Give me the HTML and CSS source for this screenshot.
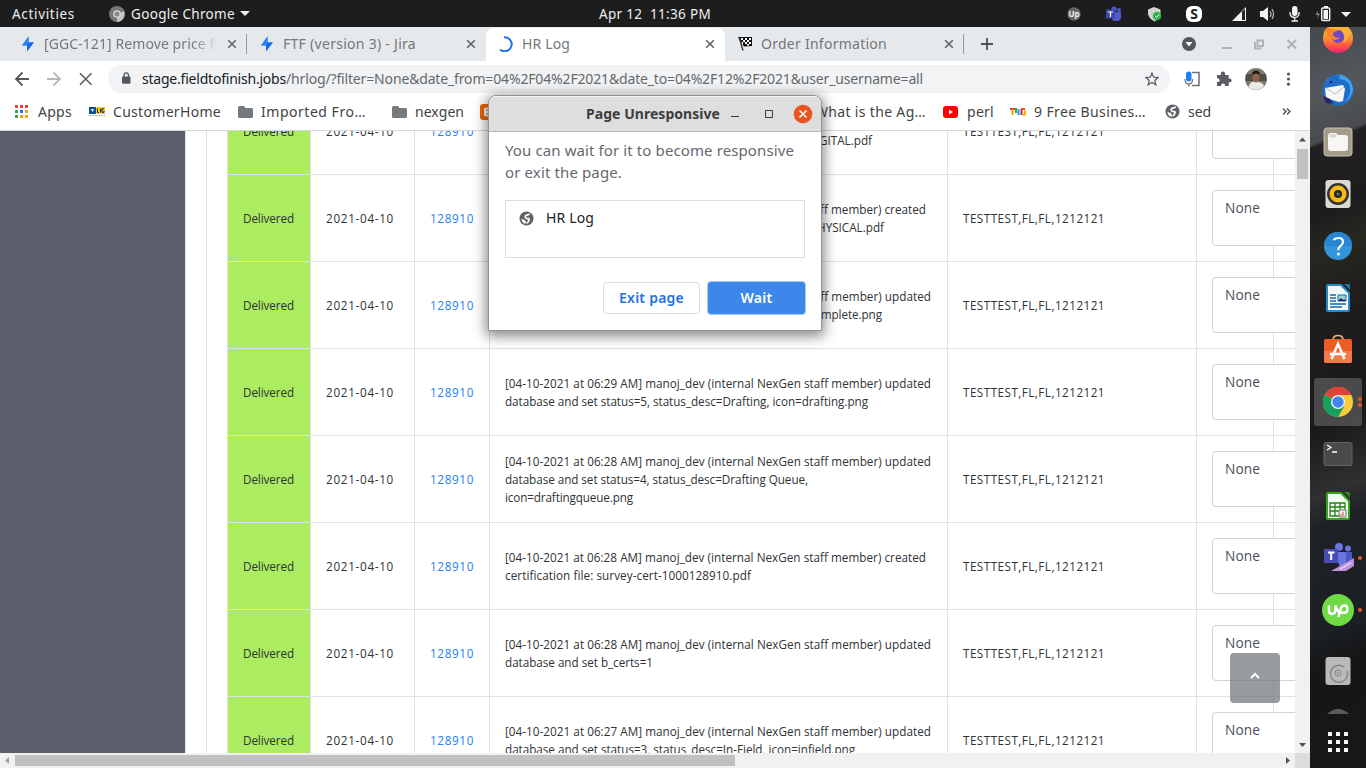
FILE: index.html
```html
<!DOCTYPE html>
<html lang="en">
<head>
<meta charset="utf-8">
<title>HR Log</title>
<link rel="stylesheet" href="styles.css">
</head>
<body>
<svg class="defs" width="0" height="0">
  <symbol id="x" viewBox="0 0 10 10"><path d="M1.200 1.200l7.600 7.600M8.800 1.200L1.200 8.800" fill="none" stroke="currentColor" stroke-width="1.600"/></symbol>
  <symbol id="jira" viewBox="0 0 16 16"><path d="M8.500.5v6H14L7 9.500H2z" fill="#2684ff"/><path d="M7 9.500L8.500 6.500H14l-7 9z" fill="#1b66e0"/><path d="M8.500.5v6L7 9.500H2z" fill="#2684ff"/></symbol>
  <symbol id="folder" viewBox="0 0 15 12"><path d="M1.500 0H6l1.500 2h6Q15 2 15 3.500v7Q15 12 13.500 12h-12Q0 12 0 10.500v-9Q0 0 1.500 0z" fill="#757a7f"/></symbol>
  <symbol id="globe" viewBox="0 0 16 16"><circle cx="8" cy="8" r="7.500" fill="#5f6368"/><path d="M11.500 3.200L9 4.200Q6 5 6.700 6.700T9.500 8.200 10.300 10.500 8 13" fill="none" stroke="#fff" stroke-width="1.800"/><path d="M2.500 8.500l3.500 1.200 1.500 2-.5 2Q3.200 12.800 2.500 8.500z" fill="#fff"/></symbol>
</svg>

<header class="topbar">
  <span class="activities" data-w="63">Activities</span>
  <svg class="app-icon" width="16" height="16" viewBox="0 0 16 16"><circle cx="8" cy="8" r="8" fill="#777"/><path d="M8 8L15 5a8 8 0 01-7 11z" fill="#c4c4c4"/><circle cx="8" cy="8" r="3.800" fill="#ddd"/><circle cx="8" cy="8" r="2.600" fill="#888"/></svg>
  <span data-w="104">Google Chrome</span>
  <svg class="caret" width="10" height="5" viewBox="0 0 10 5"><path d="M0 0h10L5 5z" fill="#eee"/></svg>
  <span class="clock" data-w="112">Apr 12&nbsp; 11:36 PM</span>
  <div class="tray">
    <svg width="300" height="26" viewBox="1066 0 300 26">
      <circle cx="1074" cy="13" r="6.700" fill="#666"/><text x="1074" y="16" class="tray-up">Up</text>
      <g fill="#5059c9"><circle cx="1114" cy="8" r="2.600"/><circle cx="1119" cy="9" r="2"/><path d="M1110 11h11v5a4 4 0 01-4 4h-4z"/><path fill="#3f48b0" d="M1106 8.500h9v9h-9z"/></g><path d="M1108 11h5M1110.500 11v5" stroke="#fff" stroke-width="1.200"/>
      <path d="M1154 6l6.500 2.500v4.500q-1 5-6 7.500-5.500-2.500-6.500-7.500V8.500z" fill="#d3d3d3"/><circle cx="1157" cy="15" r="4.300" fill="#2fb34a"/><path d="M1155 15l1.500 1.500 3-3" fill="none" stroke="#fff"/>
      <rect x="1186" y="5" width="16" height="16" rx="6" fill="#fff"/><text x="1194" y="18" class="tray-s">S</text>
      <path d="M1232 20l14-14v14z" fill="#f3f3f3"/><path d="M1242 10.500v8.500h3V8z" fill="#222"/>
      <path d="M1260 10h3l5-4v14l-5-4h-3z" fill="#f3f3f3"/><path d="M1270 10q2 3 0 6M1272 8q3 5 0 10" fill="none" stroke="#bbb" stroke-width="1.200"/>
      <rect x="1292" y="5" width="5.500" height="10" rx="2.700" fill="#f3f3f3"/><path d="M1290 11v2q1 3.500 4.700 3.500T1299 13v-2M1294.700 16.500V20M1291.500 20h6.500" fill="none" stroke="#f3f3f3" stroke-width="1.300"/>
      <path d="M1318 9l-2.500 5h2.500l-1 4 3-5.500h-2.500z" fill="#888"/><rect x="1321.700" y="7" width="8" height="12.500" rx="1" fill="none" stroke="#f3f3f3" stroke-width="1.400"/><path d="M1323.500 9h4.500v9h-4.500zM1324 5h4v2h-4z" fill="#f3f3f3"/>
      <path d="M1341 11h10l-5 5z" fill="#f3f3f3"/>
    </svg>
  </div>
</header>

<div class="desktop">
<div class="browser">
  <div class="tabs">
    <div class="tab sep"><svg class="fav"><use href="#jira"/></svg><span class="label"><span data-w="174">[GGC-121] Remove price fi</span></span><svg class="close"><use href="#x"/></svg></div>
    <div class="tab"><svg class="fav"><use href="#jira"/></svg><span class="label"><span data-w="133">FTF (version 3) - Jira</span></span><svg class="close"><use href="#x"/></svg></div>
    <div class="tab active"><svg class="fav" viewBox="0 0 16 16"><path d="M6 1.300a7 7 0 11-4 12.200" fill="none" stroke="#1a73e8" stroke-width="2"/></svg><span class="label"><span data-w="48">HR Log</span></span><svg class="close"><use href="#x"/></svg></div>
    <div class="tab sep"><svg class="fav" viewBox="0 0 16 16"><path d="M1 1h14v9l-8 .5-2-3z" fill="#111"/><path d="M2 1l4 13.500" stroke="#333" stroke-width="1.300"/><path d="M4 2h2v2H4zM8 2h2v2H8zM12 2h2v2h-2zM6 4h2v2H6zM10 4h2v2h-2zM5 6h1v2H5zM8 6h2v2H8zM12 6h2v2h-2zM10 8h2v1.500h-2z" fill="#fff"/></svg><span class="label"><span data-w="126">Order Information</span></span><svg class="close"><use href="#x"/></svg></div>
    <svg class="plus" width="12" height="12" viewBox="0 0 12 12"><path d="M6 0v12M0 6h12" stroke="#4d5155" stroke-width="1.800"/></svg>
    <svg class="wincontrols" width="120" height="20" viewBox="1180 34 120 20"><circle cx="1189" cy="44" r="7" fill="#54585c"/><path d="M1185.500 42h7l-3.500 4.500z" fill="#fff"/><path d="M1222 48h10" stroke="#b0b3b6" stroke-width="2"/><path d="M1257.500 40.500h5.500v5.500h-5.500zM1255 42v6.500h6.500" fill="none" stroke="#b0b3b6" stroke-width="2"/><path d="M1287.500 40l8.500 8.500M1296 40l-8.500 8.500" stroke="#b0b3b6" stroke-width="2"/></svg>
  </div>

  <div class="toolbar">
    <svg class="nav" width="86" height="18" viewBox="12 70 86 18"><g fill="none" stroke="#54585c" stroke-width="1.800"><path d="M29 79H16M22.500 72.500L16 79l6.500 6.500"/><path stroke="#b7babc" d="M47 79h13M53.500 72.500L60 79l-6.500 6.500"/><path stroke-width="1.500" d="M80 73.200l11.500 11.500M91.500 73.200L80 84.700"/></g></svg>
    <div class="omnibox">
      <svg class="lock" width="10" height="12" viewBox="0 0 10 12"><rect x="1" y="4.500" width="8.500" height="7.300" rx="1" fill="#54585c"/><path d="M3 5V3.200a2.200 2.200 0 014.500 0V5" fill="none" stroke="#54585c" stroke-width="1.300"/></svg>
      <span class="host" data-w="144">stage.fieldtofinish.jobs</span><span class="path" data-w="637">/hrlog/?filter=None&amp;date_from=04%2F04%2F2021&amp;date_to=04%2F12%2F2021&amp;user_username=all</span>
      <svg class="star" width="14" height="14" viewBox="0 0 14 14"><path d="M7 1.200l1.700 4 4.400.4-3.300 2.900 1 4.300L7 10.500l-3.800 2.300 1-4.300L.9 5.600l4.400-.4z" fill="none" stroke="#5f6368" stroke-width="1.300"/></svg>
    </div>
    <svg class="exts" width="120" height="24" viewBox="1180 67 120 24">
      <path d="M1192 72.500h7v13h-7" fill="none" stroke="#707478" stroke-width="1.600"/><rect x="1186" y="71.500" width="5.500" height="10" rx="2.700" fill="#1a82ef"/><path d="M1185 79q0 5 3.800 5t3.800-5M1188.800 84v2.500" fill="none" stroke="#777" stroke-width="1.300"/>
      <path d="M1217 75h4q-.8-3.500 1.900-3.500T1225 75h3.700v3.600q3-.2 3 2t-3 2v3.500h-3.600q.2-2.600-2-2.600t-2 2.600H1217v-4q2.700 0 2.700-1.900t-2.700-1.900z" fill="#5a5e62"/>
      <g><circle cx="1256" cy="79" r="11" fill="#7f7b71"/><path d="M1246 74h20v7h-20z" fill="#534d43"/><path d="M1248.500 87q2-6 5.500-5h4q5 .5 6 4a11 11 0 01-15.500 1z" fill="#eceae9"/><ellipse cx="1256" cy="77.500" rx="3.700" ry="5" fill="#8b6450"/><path d="M1252 75q0-4.500 4-4.500t4 4.500q-4-3-8 0z" fill="#1e1714"/></g>
      <g fill="#54585c"><circle cx="1288.500" cy="74" r="1.600"/><circle cx="1288.500" cy="79" r="1.600"/><circle cx="1288.500" cy="84.200" r="1.600"/></g>
    </svg>
  </div>

  <div class="bookmarks">
    <svg class="b-apps" width="13" height="13" viewBox="0 0 13 13"><path fill="#ea4335" d="M0 0h3v3H0zM5 0h3v3H5zM10 0h3v3h-3z"/><path fill="#34a853" d="M0 5h3v3H0zM0 10h3v3H0z"/><path fill="#1a73e8" d="M5 5h3v3H5z"/><path fill="#f9a60a" d="M10 5h3v3h-3zM5 10h3v3H5zM10 10h3v3h-3z"/></svg>
    <span class="b-t1" data-w="34">Apps</span>
    <svg class="b-lic" width="16" height="10" viewBox="0 0 16 10"><path fill="#124f9c" d="M0 0h7v7H0z"/><path d="M2 2h3l-1.500 3z" fill="#fff"/><path fill="#f6d50a" d="M7 0h9v7H7z"/><path d="M8.500 1.500v4H10M11.500 1.500v4M15 1.800h-2v3.500h2V4" fill="none" stroke="#124" /><path d="M0 8.500h16" stroke="#8fb2cf" stroke-dasharray="2 1"/></svg>
    <span class="b-t2" data-w="108">CustomerHome</span>
    <svg class="b-f1" width="15" height="12"><use href="#folder"/></svg>
    <span class="b-t3" data-w="105">Imported Fro…</span>
    <svg class="b-f2" width="15" height="12"><use href="#folder"/></svg>
    <span class="b-t4" data-w="49">nexgen</span>
    <svg class="b-bl" width="16" height="16" viewBox="0 0 16 16"><rect width="16" height="16" rx="3" fill="#ee6507"/><path d="M4 5.500a2 2 0 012-2h2.500a2 2 0 012 2v1.500h1v3.500a2 2 0 01-2 2H6a2 2 0 01-2-2z" fill="#fff"/><path d="M6 6h3M6 10h4" stroke="#ee6507" stroke-width="1.200"/></svg>
    <span class="b-t5" data-w="111">What is the Ag…</span>
    <svg class="b-yt" width="15" height="12" viewBox="0 0 15 12"><rect width="15" height="12" rx="3" fill="#f00"/><path d="M6 3.500v5L10 6z" fill="#fff"/></svg>
    <span class="b-t6" data-w="27">perl</span>
    <svg class="b-tv" width="16" height="8" viewBox="0 0 16 8"><g fill="none" stroke-width="2"><path stroke="#ef2d3c" d="M0 1h5"/><path stroke="#ff9c09" d="M2.500 1v6"/><path stroke="#20b04b" d="M6 0v5"/><path stroke="#179bd8" d="M8.500 1v6"/><path stroke="#c81c77" d="M11.500 1v6"/><path stroke="#fd4c10" d="M11 1h4"/><path stroke="#ffa600" d="M12 6.500h3v-4"/></g></svg>
    <span class="b-t7" data-w="112">9 Free Busines…</span>
    <svg class="b-gl" width="15" height="15"><use href="#globe"/></svg>
    <span class="b-t8" data-w="23">sed</span>
    <svg class="b-more" width="9" height="7" viewBox="0 0 9 7"><path d="M1 .5l3 3-3 3M5 .5l3 3-3 3" fill="none" stroke="#54585c" stroke-width="1.500"/></svg>
  </div>

  <div class="viewport">
    <aside class="side"></aside>
    <main class="page">
      <div class="card"><div class="rows" id="rows"></div></div>
      <button class="to-top"><svg width="10" height="7" viewBox="0 0 10 7"><path d="M1 6l4-4 4 4" fill="none" stroke="#fff" stroke-width="2"/></svg></button>
    </main>
    <div class="vscroll"><svg width="15" height="18" viewBox="0 0 15 18"><path d="M4 10.500h7L7.500 6.500z" fill="#505050"/></svg><i></i><svg class="down" width="15" height="17" viewBox="0 0 15 17"><path d="M4 7h7l-3.500 4z" fill="#505050"/></svg></div>
  </div>
  <div class="hscroll"><svg width="15" height="15" viewBox="0 0 15 15"><path d="M9 4v7L5 7.500z" fill="#a3a3a3"/></svg><i></i><svg class="right" width="15" height="15" viewBox="0 0 15 15"><path d="M6 4v7l4-3.500z" fill="#505050"/></svg><b></b></div>
</div>

<nav class="dock">
  <div class="item"><svg viewBox="0 0 32 32"><defs><linearGradient id="ff" x1=".5" y1="0" x2=".5" y2="1"><stop offset="0" stop-color="#ffc937"/><stop offset=".55" stop-color="#ff8a2f"/><stop offset=".8" stop-color="#ff4a4a"/><stop offset="1" stop-color="#ee1a7c"/></linearGradient></defs><circle cx="16" cy="16" r="15" fill="url(#ff)"/><circle cx="16" cy="14.500" r="6.500" fill="#7248c4"/><path d="M2 10Q6 3 8 7q4-1 8 2-5 0-5 4 2 4 7 2-3 5-8 2T3 7z" fill="#f9822e"/><path d="M20 1q3 4 8 9-2 8-7 11 3-5 0-10-2-2-1-10z" fill="#ffb038"/></svg></div>
  <div class="item"><svg viewBox="0 0 32 32"><circle cx="16" cy="16" r="15.500" fill="#1f6dc9"/><path d="M3 10Q7 0 18 1l-1 4q13 1 11 14-3 9-9 12Q31 24 31 15 29 2 17 .5 4 2 3 10z" fill="#3fa5e8"/><path d="M3 14l18-3 2 4-2 12-4 1-13-4z" fill="#f6f6f6"/><path d="M4 14l9 6 9-7" fill="none" stroke="#bdbdc4"/><path d="M2 22l6 3 4 5-4-1-2 1Q1 26 2 22z" fill="#242569"/><circle cx="9" cy="8" r="1" fill="#114"/></svg></div>
  <div class="item"><svg viewBox="0 0 32 32"><rect x="2" y="2" width="28" height="28" rx="3" fill="#a39c8a" stroke="#c6bfb0"/><path d="M6 10q0-3 3-3h5l2 2h7q3 0 3 3v10q0 3-3 3H9q-3 0-3-3z" fill="#f7f6f4"/><path d="M7 11q0-3 3-3h3l2 2-2 2z" fill="#ddd9ca"/></svg></div>
  <div class="item"><svg viewBox="0 0 32 32"><rect x="3.500" y="2" width="25" height="28" rx="3" fill="#ded9d2"/><circle cx="16" cy="16" r="11" fill="#333"/><circle cx="16" cy="16" r="8.500" fill="#f4ba17"/><circle cx="16" cy="16" r="4" fill="#272727"/><circle cx="16" cy="16" r="1.500" fill="#777"/></svg></div>
  <div class="item"><svg viewBox="0 0 32 32"><circle cx="16" cy="16" r="14" fill="#3495db"/><path d="M2 16a14 14 0 0128 0z" fill="#2785d1"/><path d="M11.500 10q2-2 5-2 4.500 0 4.500 4 0 2-2.500 4T16.500 20" fill="none" stroke="#fff" stroke-width="2.200"/><circle cx="16.400" cy="24" r="1.500" fill="#fff"/></svg></div>
  <div class="item"><svg viewBox="0 0 32 32"><path d="M6 3h13l8 8v17q0 1-1 1H6q-1 0-1-1V4q0-1 1-1z" fill="#f2f7fa" stroke="#258bc6" stroke-width="2"/><path d="M22 2h6v6z" fill="#1b77ac"/><path d="M8 13h6M8 16h6M8 19h6M8 22h16M8 25h12" stroke="#176aa6" stroke-width="1.300"/><path d="M16 13h8v6h-8z" fill="#9ccfe9" stroke="#176aa6"/><path d="M16 19l3-3 2 2 1-1 2 2z" fill="#225"/></svg></div>
  <div class="item"><svg viewBox="0 0 32 32"><path d="M11 6q0-4.500 5-4.500T21 6" fill="none" stroke="#dcb987" stroke-width="1.700"/><rect x="2" y="5" width="28" height="24" rx="2" fill="#ef5b25"/><path d="M2 17h28v10q0 2-2 2H4q-2 0-2-2z" fill="#f37a4b"/><path d="M9.500 25l6.500-15 6.500 15M8 20h16" fill="none" stroke="#fff" stroke-width="2.500"/></svg></div>
  <div class="item on"><svg viewBox="0 0 32 32"><circle cx="16" cy="16" r="15" fill="#fbcc37"/><path d="M16 16L3 8.500A15 15 0 0016 31l6.500-11z" fill="#16a05d"/><path d="M16 16L3 8.500A15 15 0 0129.500 9H16z" fill="#dc4437"/><circle cx="16" cy="16" r="7" fill="#f5f5f5"/><circle cx="16" cy="16" r="5.700" fill="#4285f4"/></svg><span class="dots"><i></i><i></i></span></div>
  <div class="item"><svg viewBox="0 0 32 32"><rect x="2" y="4.500" width="28" height="23" rx="2" fill="#4a4a4a" stroke="#656565"/><path d="M5 7l4 2.500L5 12M10 14h5" fill="none" stroke="#fff" stroke-width="1.300"/></svg></div>
  <div class="item"><svg viewBox="0 0 32 32"><path d="M6 3h13l8 8v17q0 1-1 1H6q-1 0-1-1V4q0-1 1-1z" fill="#f2faf1" stroke="#34a818" stroke-width="2"/><path d="M22 2h6v6z" fill="#268a11"/><path d="M8 13h15v13H8zM8 17h15M8 21h15M13 13v13M18 13v13" fill="none" stroke="#258414" stroke-width="1.300"/><path d="M17 20h7v7h-7z" fill="#eee" stroke="#777"/><path d="M19 26v-2M21 26v-4" stroke="#d75a22"/></svg></div>
  <div class="item"><svg viewBox="0 0 32 32"><g fill="#6b75de"><circle cx="17" cy="5" r="4"/><circle cx="26" cy="6.500" r="3"/><path d="M12 10h18v9q-3 8-12 6z"/></g><path d="M24 10h6v9l-6 5z" fill="#4d57c2"/><path fill="#464db7" d="M2 7h14v14H2z"/><path d="M6 10.500h6.500M9.200 10.500V18" stroke="#fff" stroke-width="2"/><path d="M9 29l23-13v8l-8 5z" fill="#bd91dc"/><path d="M18 27l11-6" stroke="#f4e6ff" stroke-width="1.700" stroke-dasharray="1.500 .7"/></svg><span class="dots"><i></i></span></div>
  <div class="item"><svg viewBox="0 0 32 32"><circle cx="16" cy="16" r="16" fill="#6fda44"/><path d="M7 11.500v5q0 3.500 3 3.500t3.300-3.500v-5q2 6 5 8M16.500 23l2-8q1-3.500 4-3.500t3 3.800q-.3 3.500-3.500 3.500t-4-2.500" fill="none" stroke="#fff" stroke-width="2.500"/></svg><span class="dots"><i></i></span></div>
  <div class="item disk"><svg viewBox="0 0 32 32"><rect x="3.500" y="2" width="25" height="28" rx="3" fill="#b9b9b9"/><path d="M22 12a8.500 8.500 0 103 4" fill="none" stroke="#888" stroke-width="1.500"/><circle cx="16" cy="18" r="3" fill="none" stroke="#888"/><circle cx="16" cy="18" r="1" fill="#888"/></svg></div>
  <svg class="peek" width="22" height="5" viewBox="0 0 22 5"><path d="M0 5Q11-5 22 5z" fill="#5a5a5a"/></svg>
  <svg class="grid" width="20" height="20" viewBox="0 0 20 20"><g fill="#f5f5f5"><path d="M0 0h4v4H0zM8 0h4v4H8zM16 0h4v4h-4zM0 8h4v4H0zM8 8h4v4H8zM16 8h4v4h-4zM0 16h4v4H0zM8 16h4v4H8zM16 16h4v4h-4z"/></g></svg>
</nav>
</div>

<section class="dialog">
  <div class="titlebar"><strong data-w="134">Page Unresponsive</strong>
    <svg width="90" height="20" viewBox="728 103 90 20"><path d="M731 115.500h8" stroke="#3d3d3d"/><path d="M765.500 109.500h7v7h-7z" fill="none" stroke="#3d3d3d"/><circle cx="803" cy="113" r="9.300" fill="#e95420"/><path d="M799.500 109.500l7 7M806.500 109.500l-7 7" stroke="#fff" stroke-width="1.600"/></svg>
  </div>
  <div class="body">
    <p><span data-w="289">You can wait for it to become responsive</span><br><span data-w="117">or exit the page.</span></p>
    <div class="list"><svg width="15" height="15"><use href="#globe"/></svg><span data-w="48">HR Log</span></div>
    <div class="actions"><button class="exit"><span data-w="65">Exit page</span></button><button class="wait"><span data-w="32">Wait</span></button></div>
  </div>
</section>
<script src="app.js"></script>
</body>
</html>
```
FILE: styles.css
```css
* { box-sizing: border-box; }
body { margin: 0; width: 1366px; height: 768px; overflow: hidden; position: relative; font-family: "Noto Sans", sans-serif; font-size: 14px; background: #1d1d1d; }
.defs { position: absolute; }
svg { display: block; flex: none; }
[data-w] { display: inline-block; white-space: nowrap; flex: none; }
button { font: inherit; padding: 0; border: 0; }

.topbar { height: 27px; display: flex; align-items: center; color: #eee; padding-left: 12px; font-size: 13.500px; }
.app-icon { margin: 0 6px 0 34px; }
.caret { margin-left: 5px; }
.clock { margin-left: 349px; }
.tray { margin-left: auto; }
.tray-up { font: bold 8px "Noto Sans", sans-serif; fill: #eee; text-anchor: middle; }
.tray-s { font: bold 14px "Noto Sans", sans-serif; fill: #222; text-anchor: middle; }

.desktop { display: flex; height: 741px; }
.browser { width: 1310px; background: #fff; display: flex; flex-direction: column; }

.tabs { height: 34px; background: #e6e9ec; display: flex; padding-left: 8px; align-items: stretch; }
.tab { width: 239px; display: flex; align-items: center; padding: 0 10px 0 12px; color: #74777b; }
.tab.sep { background: linear-gradient(#96999c, #96999c) right center / 1px 20px no-repeat; }
.tab.active { background: #fff; border-radius: 8px 8px 0 0; margin-top: 1px; padding-bottom: 1px; }
.fav { width: 16px; height: 16px; margin-right: 8px; }
.label { width: 174px; overflow: hidden; height: 22px; line-height: 21px; }
.tab:first-child .label { -webkit-mask-image: linear-gradient(90deg, #000 85%, transparent); mask-image: linear-gradient(90deg, #000 85%, transparent); }
.close { width: 10px; height: 10px; margin-left: 9px; color: #5f6368; }
.plus { margin: 11px 0 0 17px; }
.wincontrols { margin: 7px 10px 0 auto; }

.toolbar { height: 36px; display: flex; align-items: center; }
.nav { margin-left: 12px; }
.omnibox { margin-left: 10px; width: 1062px; height: 28px; border-radius: 14px; background: #f1f3f4; display: flex; align-items: center; color: #65696d; }
.omnibox span { padding-bottom: 2px; }
.lock { margin: 0 11px 2px 13px; }
.host { color: #202124; }
.star { margin: 0 11px 0 auto; }
.exts { margin-left: 10px; }

.bookmarks { height: 34px; border-bottom: 1px solid #d5d7da; display: flex; align-items: center; padding: 0 0 4px 15px; color: #3f4347; }
.bookmarks span { padding-bottom: 1px; }
.b-t1 { margin: 0 17px 0 10px; }
.b-t2 { margin: 0 17px 0 8px; }
.b-t3 { margin: 0 26px 0 8px; }
.b-t4 { margin: 0 16px 0 8px; }
.b-t5 { margin: 0 17px 0 319px; }
.b-t6 { margin: 0 16px 0 9px; }
.b-t7 { margin: 0 19px 0 8px; }
.b-t8 { margin: 0 71px 0 8px; }

.viewport { height: 622px; display: flex; }
.side { width: 185px; background: #5a5f6b; }
.page { width: 1110px; position: relative; overflow: hidden; border-left: 1px solid #dee2e6; padding-left: 20px; height: 622px; }
.card { border-left: 1px solid #dee2e6; padding-left: 20px; height: 622px; }
.rows { margin-top: -43px; border-left: 1px solid #dee2e6; width: 1068px; font-family: "Open Sans", sans-serif; font-size: 11.700px; line-height: 18px; color: #2e3235; display: inline-block; }
.row { display: grid; grid-template-columns: 83px 104px 75px 458px 249px 77px 21px; height: 87px; border-bottom: 1px solid #dee2e6; }
.row > div { border-right: 1px solid #dee2e6; padding: 0 15px 1px; display: flex; align-items: center; }
.row .status { background: #abec60; }
.row .job { color: #1b80f5; }
.row .log { flex-direction: column; align-items: flex-start; justify-content: center; }
.behind { text-align: right; white-space: nowrap; }
.row .pick { align-items: flex-start; padding-top: 15px; }
.row .select { flex: none; width: 110px; height: 56px; border: 1px solid #ced4da; border-radius: 4px; background: #fff; font-size: 13.700px; padding: 8px 12px; color: #495057; position: relative; z-index: 1; }
.to-top { position: absolute; z-index: 2; right: 15px; top: 522px; width: 50px; height: 50px; border-radius: 4px; background: rgba(108,114,118,.7); display: flex; justify-content: center; align-items: center; padding-bottom: 6px; }

.vscroll { width: 15px; background: #f1f1f1; display: flex; flex-direction: column; }
.vscroll i { width: 11px; height: 30px; margin-left: 2px; background: #c1c1c1; }
.down { margin-top: auto; }
.hscroll { height: 15px; background: #f1f1f1; display: flex; align-items: center; }
.hscroll i { width: 720px; height: 11px; background: #c1c1c1; }
.hscroll b { width: 15px; height: 15px; background: #dcdcdc; }
.right { margin-left: auto; }

.dock { width: 56px; overflow: hidden; display: flex; flex-direction: column; align-items: center; background: linear-gradient(158deg, #44494f 0, #54575b 9%, #494b4e 15.500%, #201f21 16%, #1d1c1e 25%, #272820 30%, #1f1d1d 38%, #1a191a 53%, #302f31 62%, #1e2227 66%, #1b2025 80%, #151515 85%, #18191b 100%); }
.item { width: 48px; height: 48px; margin-bottom: 4px; flex: none; display: flex; align-items: center; justify-content: center; position: relative; border-radius: 3px; }
.item:first-child { margin-top: -13px; }
.item svg { width: 32px; height: 32px; }
.item.on { background: rgba(255,255,255,.21); }
.dots { position: absolute; right: 0; top: 0; height: 48px; display: flex; flex-direction: column; justify-content: center; gap: 2px; }
.dots i { width: 4px; height: 4px; border-radius: 50%; background: #e95420; }
.disk { margin-top: 9px; }
.peek { margin-top: 10px; }
.grid { margin-top: 18px; }

.dialog { position: absolute; left: 488px; top: 95px; width: 334px; height: 236px; border: 1px solid #929292; border-radius: 8px 8px 0 0; background: #fff; box-shadow: 0 3px 13px 2px rgba(0,0,0,.48); overflow: hidden; z-index: 5; }
.titlebar { height: 36px; background: #dedede; border-bottom: 1px solid #b8b8b8; display: flex; align-items: center; padding-left: 97px; color: #3d3d3d; box-shadow: inset 0 1px #f3f3f3; }
.titlebar svg { margin-left: 8px; }
.body { padding: 7px 16px 0; }
.body p { margin: 0 0 17px; line-height: 22px; color: #65696e; font-size: 15px; height: 44px; }
.list { height: 58px; border: 1px solid #dadce0; width: 300px; display: flex; align-items: flex-start; padding: 10px 13px; color: #202124; }
.list span { margin: -3px 0 0 12px; line-height: 19px; }
.actions { display: flex; gap: 7px; justify-content: flex-end; align-items: center; margin-top: 23px; width: 301px; font-weight: 600; }
.exit { width: 97px; height: 32px; border: 1px solid #dadce0; border-radius: 4px; background: #fff; color: #1a73e8; }
.wait { width: 99px; height: 34px; border: 1px solid #a9cbfa; border-radius: 4px; background: #3d87ea; color: #fff; }
.actions button { display: flex; align-items: center; justify-content: center; padding-bottom: 2px; }
```
FILE: app.js
```js
const who = "manoj_dev (internal NexGen staff member)";
const updated = (t) => ({ text: `[04-10-2021 at ${t} AM] ${who} updated`, w: 426 });
const created = (t) => ({ text: `[04-10-2021 at ${t} AM] ${who} created`, w: 421 });

const logs = [
  [created("06:30"), { text: "survey-cert-1000128910-DIGITAL.pdf", end: 367 }],
  [created("06:30"), { text: "survey-cert-1000128910-PHYSICAL.pdf", end: 379 }],
  [updated("06:30"), { text: "database and set status=6, status_desc=Complete, icon=complete.png", w: 377 }],
  [updated("06:29"), { text: "database and set status=5, status_desc=Drafting, icon=drafting.png", w: 363 }],
  [updated("06:28"), { text: "database and set status=4, status_desc=Drafting Queue,", w: 303 }, { text: "icon=draftingqueue.png", w: 128 }],
  [created("06:28"), { text: "certification file: survey-cert-1000128910.pdf", w: 246 }],
  [updated("06:28"), { text: "database and set b_certs=1", w: 148 }],
  [updated("06:27"), { text: "database and set status=3, status_desc=In-Field, icon=infield.png", w: 350 }]
];

const line = (l) => l.end
  ? `<span class="behind" style="width:${l.end}px">${l.text}</span>`
  : `<span data-w="${l.w}">${l.text}</span>`;

document.getElementById("rows").innerHTML = logs.map((lines) => `
  <div class="row">
    <div class="status"><span data-w="51">Delivered</span></div>
    <div><span data-w="68">2021-04-10</span></div>
    <div class="job"><span data-w="44">128910</span></div>
    <div class="log">${lines.map(line).join("")}</div>
    <div><span data-w="142">TESTTEST,FL,FL,1212121</span></div>
    <div class="pick"><div class="select"><span data-w="35">None</span></div></div>
    <div></div>
  </div>`).join("");

document.querySelectorAll("[data-w]").forEach((el) => {
  const width = el.getBoundingClientRect().width;
  el.style.letterSpacing = (el.dataset.w - width) / el.textContent.length + "px";
});
```
